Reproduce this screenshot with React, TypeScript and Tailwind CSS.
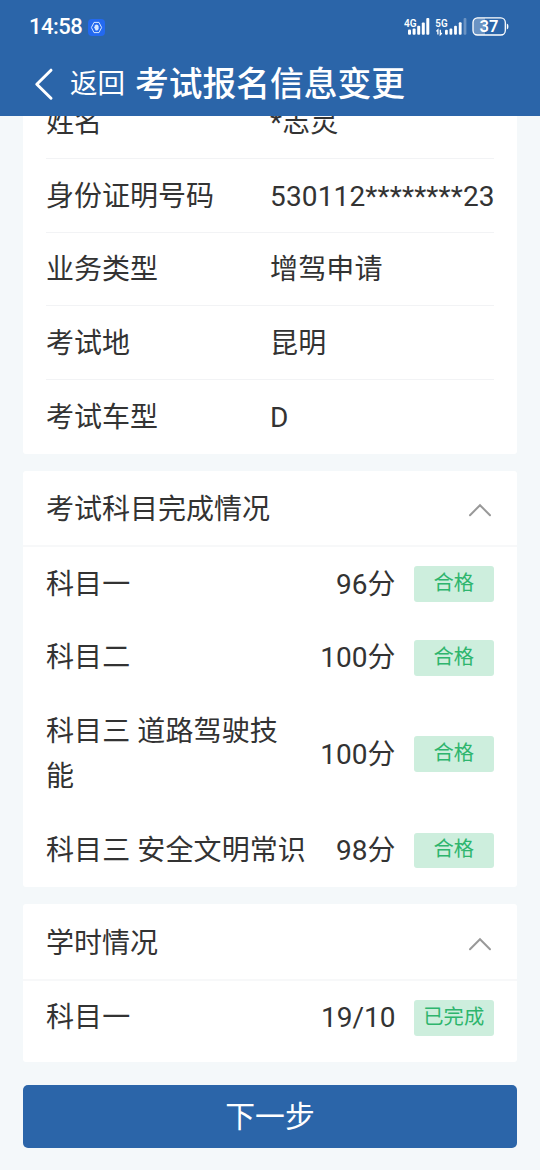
import React from "react";

interface InfoItem {
  label: string;
  value: string;
}

interface ResultItem {
  label: string;
  score: string;
  status: string;
}

const infoItems: InfoItem[] = [
  { label: "姓名", value: "*志灵" },
  { label: "身份证明号码", value: "530112********23" },
  { label: "业务类型", value: "增驾申请" },
  { label: "考试地", value: "昆明" },
  { label: "考试车型", value: "D" },
];

const examItems: ResultItem[] = [
  { label: "科目一", score: "96分", status: "合格" },
  { label: "科目二", score: "100分", status: "合格" },
  { label: "科目三 道路驾驶技能", score: "100分", status: "合格" },
  { label: "科目三 安全文明常识", score: "98分", status: "合格" },
];

const hourItems: ResultItem[] = [
  { label: "科目一", score: "19/10", status: "已完成" },
];

function StatusBar() {
  return (
    <div className="flex h-[54px] items-center justify-between pl-[29px] pr-[30px]">
      <div className="flex items-center gap-[6px]">
        <span className="text-[22px] font-medium leading-none tracking-[-0.5px]">14:58</span>
        <svg className="h-[17px] w-[17px]" viewBox="0 0 17 17" fill="none">
          <rect width="17" height="17" rx="4" fill="#2369f0" />
          <path
            d="M6 3.4h5l2.6 5.1-2.6 5.1H6L3.4 8.5z"
            stroke="#d5e6ff"
            strokeWidth="1"
            strokeLinejoin="round"
          />
          <path d="M6.2 8.2l1-2 .8-.6 2 .3.6 1.6v2.4l-1.2 1.5H7.6z" fill="#d5e6ff" />
        </svg>
      </div>
      <svg className="h-[22px] w-[106px]" viewBox="0 0 106 22" fill="#fff">
        <g fontFamily="Roboto, sans-serif" fontSize="11.5" fontWeight="600">
          <text x="0" y="10.8" textLength="12.6" lengthAdjust="spacingAndGlyphs">4G</text>
          <text x="31.3" y="10.8" textLength="12.3" lengthAdjust="spacingAndGlyphs">5G</text>
        </g>
        <rect x="4" y="13.5" width="3" height="5.2" rx="1" />
        <rect x="8.6" y="12.5" width="3" height="6.2" rx="1" />
        <rect x="13.2" y="9.8" width="3" height="8.9" rx="1" />
        <rect x="17.8" y="6.5" width="3" height="12.2" rx="1" />
        <rect x="22.3" y="2" width="3" height="16.7" rx="1" />
        <path d="M33.9 18.6v-4.8l-1.5 1.6M36.3 13.8v4.8l1.5-1.6" stroke="#fff" strokeWidth="1.3" fill="none" />
        <rect x="41" y="13.8" width="2.8" height="4.9" rx="1" />
        <rect x="45.5" y="12.5" width="2.8" height="6.2" rx="1" />
        <rect x="50.1" y="9.8" width="2.8" height="8.9" rx="1" />
        <rect x="54.8" y="6.2" width="2.8" height="12.5" rx="1" />
        <rect x="59.6" y="2" width="2.8" height="16.7" rx="1" opacity=".3" />
        <path d="M73 2h8v17H73a4 4 0 0 1-4-4V6a4 4 0 0 1 4-4z" opacity=".3" />
        <rect x="69" y="1.8" width="32.3" height="17.2" rx="4.5" fill="none" stroke="#fff" strokeWidth="1.3" />
        <path d="M102.8 7.5c2.2.5 2.2 5.5 0 6z" />
        <text
          x="85"
          y="16.2"
          textAnchor="middle"
          fontFamily="Roboto, sans-serif"
          fontSize="16.5"
          fontWeight="600"
        >
          37
        </text>
      </svg>
    </div>
  );
}

function NavBar() {
  return (
    <div className="flex h-[62px] items-center pb-[2px] pl-[34px]">
      <svg className="h-[34px] w-5" viewBox="0 0 20 34" fill="none">
        <path
          d="M17 3.2L2.8 17.2L17 31.2"
          stroke="#fff"
          strokeWidth="3"
          strokeLinecap="round"
          strokeLinejoin="round"
        />
      </svg>
      <span className="ml-4 text-[27.5px] leading-none">返回</span>
      <h1 className="ml-[10px] pt-px text-[33.75px] font-medium leading-none">考试报名信息变更</h1>
    </div>
  );
}

function InfoCard({ items }: { items: InfoItem[] }) {
  return (
    <section className="rounded-[3px] bg-white px-[23px]">
      {items.map((item) => (
        <div
          key={item.label}
          className="flex h-[73.75px] items-center border-b border-[#f2f3f5] pt-[2px] last:border-b-0"
        >
          <span className="w-[224px] shrink-0">{item.label}</span>
          <span className="whitespace-nowrap tracking-[0.15px]">{item.value}</span>
        </div>
      ))}
    </section>
  );
}

function ResultRow({ label, score, status }: ResultItem) {
  return (
    <div className="flex items-center px-[23px] py-[14.4px]">
      <span className="flex-1 break-all pr-4 tracking-[0.1px]">{label}</span>
      <span className="shrink-0">{score}</span>
      <span className="ml-[18px] flex h-[35.5px] w-[80.5px] shrink-0 items-center justify-center rounded-[3px] bg-[#cdeedd] pb-[2px] text-[20.3px] leading-none text-[#2eb56d]">
        {status}
      </span>
    </div>
  );
}

function ResultCard({ title, items, className = "" }: { title: string; items: ResultItem[]; className?: string }) {
  return (
    <section className={`mt-[17px] rounded-[3px] bg-white ${className}`}>
      <div className="flex h-[76.5px] items-center justify-between border-b-2 border-[#f7f8f9] pl-[23px] pr-[25px]">
        <h2 className="pt-[3px]">{title}</h2>
        <svg className="mt-1 h-4 w-6" viewBox="0 0 24 16" fill="none">
          <path d="M2 13.2L12 3.2L22 13.2" stroke="#999" strokeWidth="2" strokeLinecap="round" />
        </svg>
      </div>
      {items.map((item) => (
        <ResultRow key={item.label} {...item} />
      ))}
    </section>
  );
}

export default function App() {
  return (
    <div className="flex h-[1170px] w-[540px] flex-col overflow-hidden bg-[#f4f8fa] font-[Roboto,'Noto_Sans_CJK_SC',sans-serif] text-[28px] leading-[45px] text-[#333]">
      <header className="h-[116px] shrink-0 bg-[#2b65a9] text-white">
        <StatusBar />
        <NavBar />
      </header>
      <main className="flex-1 overflow-hidden px-[23px]">
        <div className="-mt-[31px]">
          <InfoCard items={infoItems} />
          <ResultCard title="考试科目完成情况" items={examItems} />
          <ResultCard title="学时情况" items={hourItems} className="pb-[7px]" />
        </div>
      </main>
      <footer className="px-[23px] pb-[22px]">
        <button className="flex h-[63px] w-full items-center justify-center rounded-[5px] bg-[#2b65a9] text-[29.8px] text-white">
          下一步
        </button>
      </footer>
    </div>
  );
}
